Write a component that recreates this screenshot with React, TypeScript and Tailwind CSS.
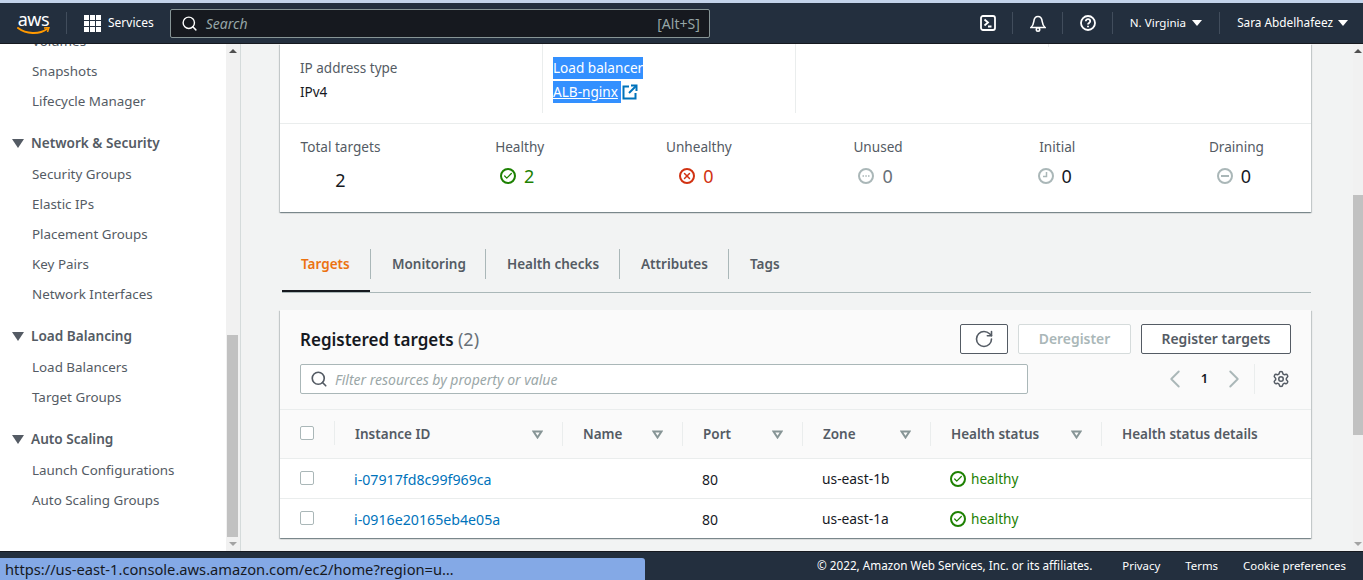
import { Check, ChevronLeft, ChevronRight, RotateCw, Search, Settings, X } from "lucide-react"

const font = "font-['Noto_Sans','Open_Sans',sans-serif]"

function TopDivider() {
  return <div className="w-px h-[22px] bg-[#414d5c]" />
}

function Caret() {
  return <span className="inline-block w-0 h-0 border-x-[5px] border-x-transparent border-t-[6px] border-t-white" />
}

function AwsLogo() {
  return (
    <div className="flex flex-col items-center w-[33px]">
      <span className="text-white text-[18px] leading-[15px] tracking-[-0.4px]">aws</span>
      <svg width="33" height="8" viewBox="0 0 33 8" fill="none">
        <path d="M1 1c8 6 21 7 29 1" stroke="#ff9900" strokeWidth="2" strokeLinecap="round" />
        <path d="M27 1l5-.5-1.500 4.500" stroke="#ff9900" strokeWidth="1.500" />
      </svg>
    </div>
  )
}

function GridIcon() {
  return (
    <div className="grid grid-cols-3 gap-[1px] w-[17px]">
      {Array.from({ length: 9 }).map((_, i) => (
        <span key={i} className="w-[5px] h-[5px] bg-white" />
      ))}
    </div>
  )
}

function Header() {
  return (
    <header className="h-[44px] shrink-0 bg-[#232f3e] border-t-[3px] border-t-[#c3d3ea] border-b border-b-[#16191f] flex items-center text-white text-[12px]">
      <div className="ml-[17px] mr-[16px]"><AwsLogo /></div>
      <TopDivider />
      <div className="ml-[17px] mr-[16px] flex items-center gap-[7px]">
        <GridIcon />
        <span>Services</span>
      </div>
      <div className="w-[540px] h-[29px] bg-[#16191f] border border-[#879596] rounded-[2px] flex items-center pl-[10px] pr-[9px]">
        <Search size={17} strokeWidth={2} className="text-white" />
        <span className="ml-[8px] italic text-[14px] text-[#95a5a6]">Search</span>
        <span className="ml-auto text-[14px] text-[#95a5a6]">[Alt+S]</span>
      </div>
      <div className="ml-auto flex items-center">
        <svg width="16" height="16" viewBox="0 0 16 16" fill="none" stroke="white" strokeWidth="1.800" className="mr-[16px]">
          <rect x="1" y="1" width="14" height="14" rx="2" />
          <path d="M4.500 4.500L8 7.500 4.500 10.500M8 11.500h3.500" />
        </svg>
        <TopDivider />
        <svg width="16" height="17" viewBox="0 0 16 17" fill="none" stroke="white" strokeWidth="1.600" className="ml-[17px] mr-[16px]">
          <path d="M1 12.500h14c-2-2-2.500-3.500-2.800-6C11.900 3.500 10.500 1.500 8 1.500S4.100 3.500 3.800 6.500C3.500 9 3 10.500 1 12.500z" />
          <circle cx="8" cy="14.500" r="1.700" />
        </svg>
        <TopDivider />
        <svg width="16" height="16" viewBox="0 0 16 16" fill="none" stroke="white" strokeWidth="1.800" className="ml-[17px] mr-[16px]">
          <circle cx="8" cy="8" r="7" />
          <path d="M5.800 6.200C5.800 4.900 6.800 4.200 8 4.200s2.200.8 2.200 2c0 1.700-2.200 1.700-2.200 3.200" />
          <path d="M8 10.800v1.500" />
        </svg>
        <TopDivider />
        <div className="ml-[17px] mr-[17px] flex items-center gap-[6px] text-[11.6px]">
          <span>N. Virginia</span>
          <Caret />
        </div>
        <TopDivider />
        <div className="ml-[17px] mr-[15px] flex items-center gap-[5px] text-[11.8px]">
          <span>Sara Abdelhafeez</span>
          <Caret />
        </div>
      </div>
    </header>
  )
}

function ScrollBar({ spacer, thumb }: { spacer: string; thumb: string }) {
  return (
    <div className="h-full bg-[#f1f1f1] flex flex-col items-center relative w-full">
      <span className="mt-[5px] w-0 h-0 border-x-[4px] border-x-transparent border-b-[4px] border-b-[#505050]" />
      <div className={spacer} />
      <div className={`w-full ${thumb} bg-[#c1c1c1]`} />
      <div className="flex-1" />
      <span className="mb-[5px] w-0 h-0 border-x-[4px] border-x-transparent border-t-[4px] border-t-[#a3a3a3]" />
    </div>
  )
}

function NavGroup({ title, items }: { title: string; items: string[] }) {
  return (
    <div className="mt-[17px]">
      <div className="h-[20px] flex items-center gap-[7px] pl-[12px] text-[13.6px] font-semibold text-[#545b64]">
        <span className="w-0 h-0 border-x-[6px] border-x-transparent border-t-[9px] border-t-[#545b64]" />
        <span>{title}</span>
      </div>
      <div className="mt-[6px]">
        {items.map((t) => (
          <div key={t} className="h-[30px] flex items-center pl-[32px] text-[13.4px] text-[#545b64]">{t}</div>
        ))}
      </div>
    </div>
  )
}

function Sidebar() {
  return (
    <aside className="w-[241px] shrink-0 flex bg-white border-r border-r-[#d5dbdb]">
      <div className="w-[226px] overflow-hidden">
        <div className="-mt-[18px]">
          {["Volumes", "Snapshots", "Lifecycle Manager"].map((t) => (
            <div key={t} className="h-[30px] flex items-center pl-[32px] text-[13.4px] text-[#545b64]">{t}</div>
          ))}
          <NavGroup title="Network & Security" items={["Security Groups", "Elastic IPs", "Placement Groups", "Key Pairs", "Network Interfaces"]} />
          <NavGroup title="Load Balancing" items={["Load Balancers", "Target Groups"]} />
          <NavGroup title="Auto Scaling" items={["Launch Configurations", "Auto Scaling Groups"]} />
        </div>
      </div>
      <div className="w-[14px] pl-[1px] pr-[2px] bg-[#f1f1f1]">
        <ScrollBar spacer="h-[282px]" thumb="h-[202px]" />
      </div>
    </aside>
  )
}

function Stat({ label, value, tone, icon }: { label: string; value: string; tone: string; icon?: React.ReactNode }) {
  return (
    <div className="w-[80px] flex flex-col items-center">
      <div className="text-[13.6px] leading-[18px] text-[#545b64] whitespace-nowrap">{label}</div>
      {icon ? (
        <div className={`mt-[9px] mr-[5px] h-[22px] flex items-center gap-[8px] text-[18px] ${tone}`}>
          {icon}
          <span>{value}</span>
        </div>
      ) : (
        <div className={`mt-[13px] h-[22px] flex items-center text-[18px] ${tone}`}>{value}</div>
      )}
    </div>
  )
}

function GreenCheck({ size = 16 }: { size?: number }) {
  return (
    <span style={{ width: size, height: size }} className="rounded-full border-2 border-[#1d8102] flex items-center justify-center shrink-0">
      <Check size={size - 6} strokeWidth={3} className="text-[#1d8102]" />
    </span>
  )
}

function StatusIcon({ kind }: { kind: "dots" | "clock" | "minus" }) {
  return (
    <svg width="16" height="16" viewBox="0 0 16 16" fill="none" stroke="#aab7b8" strokeWidth="2">
      <circle cx="8" cy="8" r="7" />
      {kind === "dots" && <path d="M4.500 8h1.500M7.300 8h1.500M10 8h1.500" strokeWidth="1.500" />}
      {kind === "clock" && <path d="M8.500 4v4.500H5" strokeWidth="1.500" />}
      {kind === "minus" && <path d="M4 8h8" />}
    </svg>
  )
}

function SummaryCard() {
  return (
    <section className="bg-white shadow-[0_1px_1px_0_rgba(0,28,36,0.3),1px_1px_1px_0_rgba(0,28,36,0.15),-1px_1px_1px_0_rgba(0,28,36,0.15)]">
      <div className="h-[80px] border-b border-b-[#eaeded] flex">
        <div className="w-[263px] h-[69px] border-r border-r-[#eaeded] pl-[20px] pt-[13px]">
          <div className="text-[13.5px] leading-[22px] text-[#545b64]">IP address type</div>
          <div className="text-[13.5px] leading-[26px] text-[#16191f]">IPv4</div>
        </div>
        <div className="w-[253px] h-[69px] border-r border-r-[#eaeded] pl-[10px] pt-[13px]">
          <div className="text-[13.6px] leading-[22px] text-white bg-[#3390ff] w-fit">Load balancer</div>
          <div className="mt-[2px] flex items-center text-[13.6px] leading-[22px] w-fit">
            <span className="text-white bg-[#3390ff] pr-[3px]"><span className="underline">ALB-nginx</span></span>
            <svg width="16" height="16" viewBox="0 0 16 16" fill="none" stroke="#0073bb" strokeWidth="2" className="ml-[1px]">
              <path d="M7 2.500H1.500v12h12V9" />
              <path d="M9 1.500h5.500V7" />
              <path d="M14 2L7 9" />
            </svg>
          </div>
        </div>
        <div className="w-[253px] h-[3px] border-r border-r-[#eaeded]" />
      </div>
      <div className="h-[88px] pl-[20.5px] pt-[14px] flex gap-[99.2px]">
        <Stat label="Total targets" value="2" tone="text-[#16191f]" />
        <Stat
          label="Healthy"
          value="2"
          tone="text-[#1d8102]"
          icon={<GreenCheck />}
        />
        <Stat
          label="Unhealthy"
          value="0"
          tone="text-[#d13212]"
          icon={
            <span className="w-4 h-4 rounded-full border-2 border-[#d13212] flex items-center justify-center">
              <X size={10} strokeWidth={3.500} className="text-[#d13212]" />
            </span>
          }
        />
        <Stat label="Unused" value="0" tone="text-[#687078]" icon={<StatusIcon kind="dots" />} />
        <Stat label="Initial" value="0" tone="text-[#16191f]" icon={<StatusIcon kind="clock" />} />
        <Stat label="Draining" value="0" tone="text-[#16191f]" icon={<StatusIcon kind="minus" />} />
      </div>
    </section>
  )
}

function Tabs() {
  const tabBase = "h-full flex items-center text-[13.5px] font-semibold relative"
  const sep = <span className="absolute left-0 top-[1px] h-[30px] w-px bg-[#aab7b8]" />
  return (
    <div className="mt-[36px] h-[45px] flex border-b border-b-[#aab7b8] ml-[2px]">
      <div className={`${tabBase} w-[88px] pl-[19px] pb-[10px] border-b-2 border-b-[#16191f] text-[#ec7211]`}>Targets</div>
      <div className={`${tabBase} w-[115px] pl-[22px] pb-[12px] text-[#545b64]`}>{sep}Monitoring</div>
      <div className={`${tabBase} w-[134px] pl-[22px] pb-[12px] text-[#545b64]`}>{sep}Health checks</div>
      <div className={`${tabBase} w-[109px] pl-[22px] pb-[12px] text-[#545b64]`}>{sep}Attributes</div>
      <div className={`${tabBase} pl-[22px] pb-[12px] text-[#545b64]`}>{sep}Tags</div>
    </div>
  )
}

function SortMark() {
  return (
    <svg width="11" height="9" viewBox="0 0 11 9" fill="none" stroke="#879596" strokeWidth="2">
      <path d="M1.500 1.500h8L5.500 7.500z" />
    </svg>
  )
}

function Box({ className = "" }: { className?: string }) {
  return <span className={`w-[14px] h-[14px] rounded-[2px] border border-[#aab7b8] bg-white inline-block ${className}`} />
}

const cols = [
  { label: "Instance ID", w: "w-[228px]", sort: true },
  { label: "Name", w: "w-[120px]", sort: true },
  { label: "Port", w: "w-[120px]", sort: true },
  { label: "Zone", w: "w-[128px]", sort: true },
  { label: "Health status", w: "w-[171px]", sort: true },
  { label: "Health status details", w: "flex-1", sort: false },
]

function Row({ id, zone }: { id: string; zone: string }) {
  return (
    <div className="h-[40px] pt-[2px] border-t border-t-[#eaeded] flex items-center text-[14px] bg-white">
      <div className="w-[75px] pl-[20px] -mt-[4px] flex"><Box /></div>
      <div className="w-[227px] -ml-[1px] text-[14.2px] text-[#0073bb]">{id}</div>
      <div className="w-[120px]" />
      <div className="w-[120px] pl-[1px] text-[#16191f]">80</div>
      <div className="w-[129px] pl-[1px] text-[13.8px] text-[#16191f]">{zone}</div>
      <div className="flex items-center gap-[5px] text-[13.6px] text-[#1d8102]">
        <GreenCheck />
        <span>healthy</span>
      </div>
    </div>
  )
}

function TargetsCard() {
  return (
    <section className="mt-[17px] bg-[#fafafa] shadow-[0_1px_1px_0_rgba(0,28,36,0.3),1px_1px_1px_0_rgba(0,28,36,0.15),-1px_1px_1px_0_rgba(0,28,36,0.15)]">
      <div className="h-[100px] pl-[20px] pr-[20px] pt-[14px] border-b border-b-[#eaeded]">
        <div className="flex items-center h-[30px]">
          <h2 className="text-[17px] font-semibold text-[#16191f]">
            Registered targets <span className="text-[18px] font-normal text-[#687078]">(2)</span>
          </h2>
          <div className="ml-auto flex gap-[10px] text-[13.9px] font-semibold">
            <button className="w-[48px] h-[30px] bg-white border border-[#545b64] rounded-[2px] flex items-center justify-center">
              <RotateCw size={20} strokeWidth={1.900} className="text-[#545b64]" />
            </button>
            <button className="w-[113px] h-[30px] bg-white border border-[#d5dbdb] rounded-[2px] text-[#aab7b8]">Deregister</button>
            <button className="w-[150px] h-[30px] bg-white border border-[#545b64] rounded-[2px] text-[#545b64]">Register targets</button>
          </div>
        </div>
        <div className="mt-[10px] flex items-center h-[30px]">
          <div className="w-[728px] h-[30px] bg-white border border-[#aab7b8] rounded-[2px] flex items-center pl-[9px]">
            <Search size={18} strokeWidth={2.200} className="text-[#545b64]" />
            <span className="ml-[7px] italic text-[14px] text-[#9ba7a8]">Filter resources by property or value</span>
          </div>
          <div className="ml-auto mr-[1px] flex items-center">
            <ChevronLeft size={30} strokeWidth={1.500} className="text-[#aab7b8]" />
            <span className="w-[29px] text-center text-[13px] font-semibold text-[#16191f]">1</span>
            <ChevronRight size={30} strokeWidth={1.500} className="text-[#aab7b8]" />
            <span className="ml-[5px] mr-[17px] w-px h-[30px] bg-[#eaeded]" />
            <Settings size={18} strokeWidth={2} className="text-[#545b64]" />
          </div>
        </div>
      </div>
      <div className="h-[48px] flex items-center text-[13.5px] font-semibold text-[#545b64]">
        <div className="w-[55px] pl-[20px] h-[24px] flex items-center border-r border-r-[#eaeded] -mt-[2px]"><Box /></div>
        {cols.map((c) => (
          <div key={c.label} className={`${c.w} h-[24px] flex items-center pl-[20px] pr-[19px] justify-between ${c.sort ? "border-r border-r-[#eaeded]" : ""}`}>
            <span className="whitespace-nowrap">{c.label}</span>
            {c.sort && <SortMark />}
          </div>
        ))}
      </div>
      <Row id="i-07917fd8c99f969ca" zone="us-east-1b" />
      <Row id="i-0916e20165eb4e05a" zone="us-east-1a" />
    </section>
  )
}

function Footer() {
  return (
    <footer className="h-[29px] shrink-0 bg-[#232f3e] border-t border-t-[#16191f] flex items-center justify-end pr-[17px] text-[11.4px] text-white gap-[25px]">
      <span className="mr-[5px] text-[11.7px]">© 2022, Amazon Web Services, Inc. or its affiliates.</span>
      <span>Privacy</span>
      <span>Terms</span>
      <span>Cookie preferences</span>
    </footer>
  )
}

export default function App() {
  return (
    <div className={`${font} h-screen w-full flex flex-col overflow-hidden relative bg-[#f2f3f3]`}>
      <Header />
      <div className="flex-1 flex min-h-0">
        <Sidebar />
        <main className="flex-1 min-w-0 overflow-hidden pl-[39px] pr-[42px]">
          <SummaryCard />
          <Tabs />
          <TargetsCard />
        </main>
        <div className="w-[10px] shrink-0">
          <ScrollBar spacer="h-[142px]" thumb="h-[240px]" />
        </div>
      </div>
      <Footer />
      <div className="absolute left-0 bottom-0 w-[645px] h-[22px] bg-[#84a9e6] rounded-tr-[3px] pl-[5px] flex items-center text-[14.7px] text-[#16191f]">
        https://us-east-1.console.aws.amazon.com/ec2/home?region=u…
      </div>
    </div>
  )
}
